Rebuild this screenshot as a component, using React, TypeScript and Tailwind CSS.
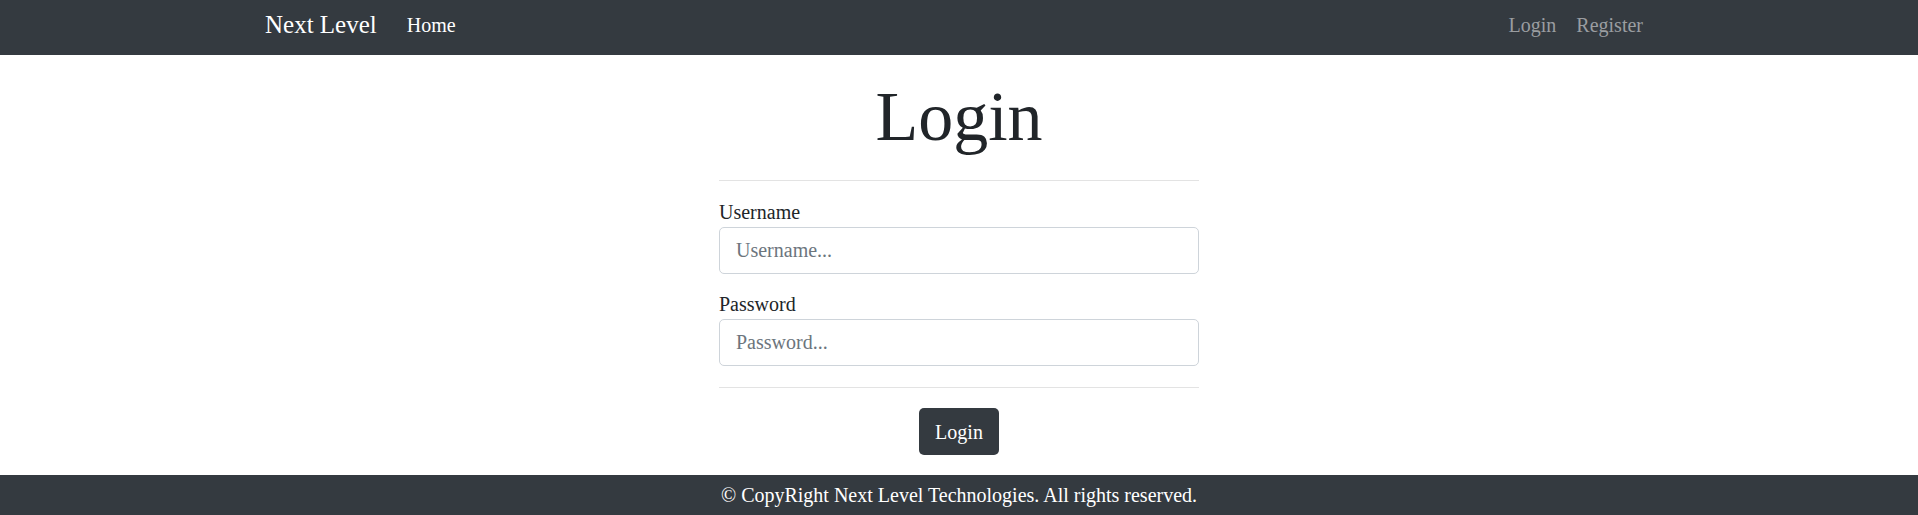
import React from "react";

const NavBar = () => {
  return (
    <nav className="h-[55px] bg-[#343a40]">
      <div className="mx-auto flex h-[50px] w-[1388px] items-center">
        <a href="#" className="mr-[20px] text-[25px] leading-[37.5px] text-white">
          Next Level
        </a>
        <a href="#" className="px-[10px] text-[20px] leading-[30px] text-white">
          Home
        </a>
        <div className="ml-auto flex items-center">
          <a href="#" className="px-[10px] text-[20px] leading-[30px] text-[#9a9da0]">
            Login
          </a>
          <a href="#" className="px-[10px] text-[20px] leading-[30px] text-[#9a9da0]">
            Register
          </a>
        </div>
      </div>
    </nav>
  );
};

type TFieldProps = {
  label: string;
  type?: string;
  placeholder: string;
};

const Field = ({ label, type = "text", placeholder }: TFieldProps) => (
  <div className="flex flex-col">
    <label className="text-[20px] leading-[30px] text-[#212529]">{label}</label>
    <input
      type={type}
      placeholder={placeholder}
      className="h-[47px] w-full rounded-[5px] border border-[#ced4da] bg-white px-[16px] text-[20px] text-[#495057] outline-none placeholder:text-[#6c757d]"
    />
  </div>
);

const LoginForm = () => {
  return (
    <main className="flex h-[420px] flex-col items-center">
      <h1 className="mt-[20px] text-[70px] font-normal leading-[84px] text-[#212529]">
        Login
      </h1>
      <form className="w-[480px]" onSubmit={(e) => e.preventDefault()}>
        <hr className="mt-[21px] border-t border-[#e3e3e3]" />
        <div className="mt-[16px] flex flex-col gap-[15px]">
          <Field label="Username" placeholder="Username..." />
          <Field label="Password" type="password" placeholder="Password..." />
        </div>
        <hr className="mt-[21px] border-t border-[#e3e3e3]" />
        <div className="mt-[20px] flex justify-center">
          <button
            type="submit"
            className="h-[47px] rounded-[5px] bg-[#343a40] px-[16px] text-[20px] leading-[30px] text-white"
          >
            Login
          </button>
        </div>
      </form>
    </main>
  );
};

const Footer = () => (
  <footer className="flex h-[40px] items-center justify-center bg-[#343a40] text-[20px] leading-[30px] text-white">
    © CopyRight Next Level Technologies. All rights reserved.
  </footer>
);

export default function App() {
  return (
    <div className="min-h-[515px] bg-white font-['Liberation_Serif','Times_New_Roman',serif]">
      <NavBar />
      <LoginForm />
      <Footer />
    </div>
  );
}
